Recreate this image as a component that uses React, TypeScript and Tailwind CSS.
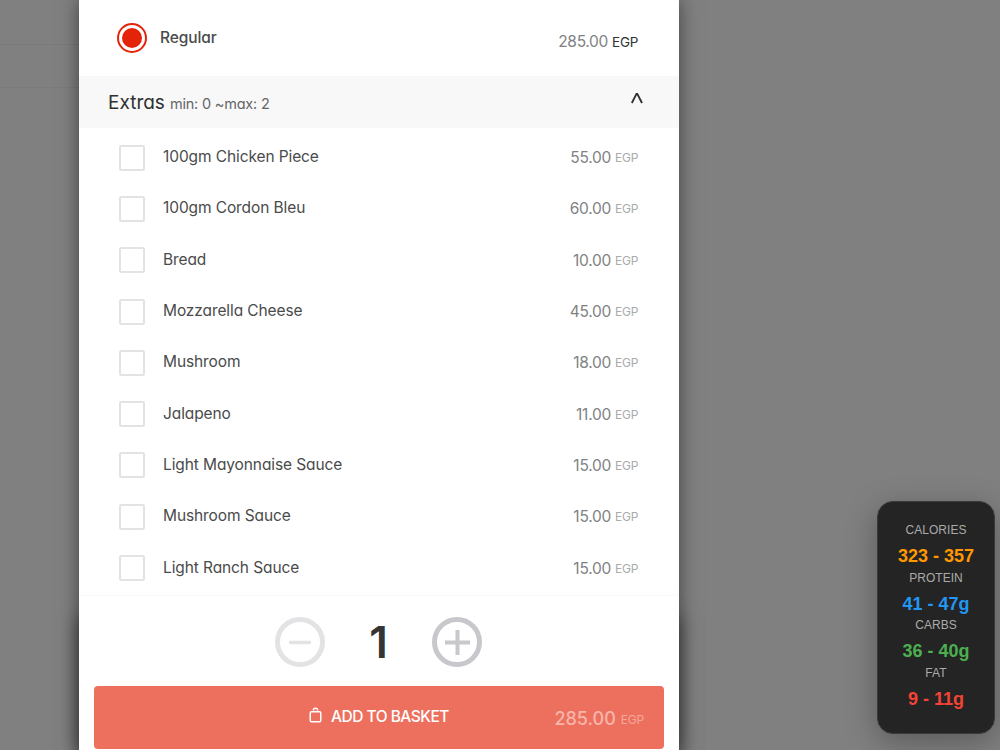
const extras = [
  { name: "100gm Chicken Piece", price: "55.00" },
  { name: "100gm Cordon Bleu", price: "60.00" },
  { name: "Bread", price: "10.00" },
  { name: "Mozzarella Cheese", price: "45.00" },
  { name: "Mushroom", price: "18.00" },
  { name: "Jalapeno", price: "11.00" },
  { name: "Light Mayonnaise Sauce", price: "15.00" },
  { name: "Mushroom Sauce", price: "15.00" },
  { name: "Light Ranch Sauce", price: "15.00" },
];

const nutrition = [
  { label: "CALORIES", value: "323 - 357", color: "text-[#ff9800]" },
  { label: "PROTEIN", value: "41 - 47g", color: "text-[#2196f3]" },
  { label: "CARBS", value: "36 - 40g", color: "text-[#4caf50]" },
  { label: "FAT", value: "9 - 11g", color: "text-[#f44336]" },
];

function ExtraRow({ name, price }: { name: string; price: string }) {
  return (
    <div className="flex h-[51.3px] items-center pl-10 pr-[41px]">
      <div className="size-[26px] shrink-0 rounded-[2px] border-2 border-[#e2e3e4]" />
      <span className="ml-[18px] -mt-px text-[15.5px] leading-5 tracking-[-0.1px] text-[#4a4b4b]">{name}</span>
      <span className="ml-auto mt-px text-[15.5px] leading-5 tracking-[-0.25px] text-[#808283]">{price}</span>
      <span className="ml-1 mt-px text-[12px] leading-5 tracking-[-0.3px] text-[#a9abac]">EGP</span>
    </div>
  );
}

function NutritionCard() {
  return (
    <div className="absolute left-[877px] top-[501px] h-[233px] w-[118px] rounded-2xl border border-[#3a3a3a] bg-[#242424] pt-[17px] text-center font-['Liberation_Sans',Arial,sans-serif] shadow-[0_8px_32px_rgba(0,0,0,0.3)]">
      {nutrition.map((item) => (
        <div key={item.label} className="h-[47.65px]">
          <div className="text-[12px] leading-[22px] tracking-[0.05px] text-[#aaaaaa]">{item.label}</div>
          <div className={`mt-1 text-[18px] leading-[22px] font-bold ${item.color}`}>{item.value}</div>
        </div>
      ))}
    </div>
  );
}

export default function App() {
  return (
    <div className="relative flex h-[750px] w-[1000px] overflow-hidden bg-[#808080] font-[Inter,sans-serif] [font-feature-settings:'cv11']">
      {/* Page behind the overlay */}
      <div className="w-[79px] shrink-0">
        <div className="h-[45px] border-b border-[#7a7a7a]" />
        <div className="h-[43px] border-b border-[#7a7a7a]" />
      </div>

      <main className="flex h-[750px] w-[600px] shrink-0 flex-col bg-white shadow-[0_0_18px_rgba(0,0,0,0.5)]">
        <div className="flex h-[76px] items-center pl-[38px] pr-[41px]">
          <div className="flex size-[30px] items-center justify-center rounded-full border-2 border-[#e42409]">
            <div className="size-5 rounded-full bg-[#e42409]" />
          </div>
          <span className="ml-[13px] text-[15.5px] font-medium leading-5 tracking-[-0.12px] text-[#4a4b4b]">Regular</span>
          <span className="ml-auto mt-2 text-[15.5px] leading-5 tracking-[-0.3px] text-[#808283]">285.00</span>
          <span className="ml-1 mt-2 text-[13.5px] leading-5 tracking-[-0.3px] text-[#303131]">EGP</span>
        </div>

        <div className="flex h-[52px] items-center bg-[#f8f8f8] pl-[29px] pr-9">
          <span className="mt-0.5 text-[19px] leading-6 text-[#2f3030]">Extras</span>
          <span className="ml-[5px] mt-1 text-[14.5px] leading-6 tracking-[-0.2px] text-[#666768]">min: 0 ~max: 2</span>
          <svg className="-mt-2 ml-auto" width="12" height="12" viewBox="0 0 12 12" fill="none" stroke="#2f3030" strokeWidth="1.9">
            <path d="M.8 11 5.5 1.9h.8L11 11" />
          </svg>
        </div>

        <div className="h-[467px] pt-1">
          {extras.map((extra) => (
            <ExtraRow key={extra.name} name={extra.name} price={extra.price} />
          ))}
        </div>

        <footer className="h-[155px] border-t border-[#fafafa] bg-white px-[15px] shadow-[0_22px_18px_rgba(0,0,0,0.5)]">
          <div className="flex h-[90px] items-center pl-[181px] pt-0.5">
            <svg width="50" height="50" viewBox="0 0 50 50" fill="none" stroke="#e3e3e5">
              <circle cx="25" cy="25" r="22.5" strokeWidth="5" />
              <path d="M15.5 25.5h19" strokeWidth="3.5" strokeLinecap="round" />
            </svg>
            <span className="w-[107px] text-center text-[44px] font-semibold leading-[50px] text-[#343535]">1</span>
            <svg width="50" height="50" viewBox="0 0 50 50" fill="none" stroke="#c8c8cc">
              <circle cx="25" cy="25" r="22.5" strokeWidth="5" />
              <path d="M13 25.5h25M25.5 13v25" strokeWidth="4" />
            </svg>
          </div>
          <button className="flex h-[63px] w-[570px] items-center rounded-[4px] bg-[#ed705e] pb-0.5 pl-[215px] pr-5 text-white">
            <svg className="-mt-1" width="13" height="16" viewBox="0 0 13 16" fill="none" stroke="currentColor" strokeWidth="1.5">
              <rect x="1.25" y="4.75" width="10.5" height="10" rx="1.2" />
              <path d="M4.4 3.4a2.1 2.1 0 0 1 4.2 0" />
            </svg>
            <span className="mt-px ml-[9px] text-[15.5px] font-medium leading-5 tracking-[-0.5px]">ADD TO BASKET</span>
            <span className="ml-auto mt-1 text-[18px] font-medium leading-5 text-[#f7b5ab]">285.00</span>
            <span className="ml-[5px] mt-1.5 text-[12px] leading-5 tracking-[-0.2px] text-[#f4a89d]">EGP</span>
          </button>
        </footer>
      </main>

      <NutritionCard />
    </div>
  );
}
